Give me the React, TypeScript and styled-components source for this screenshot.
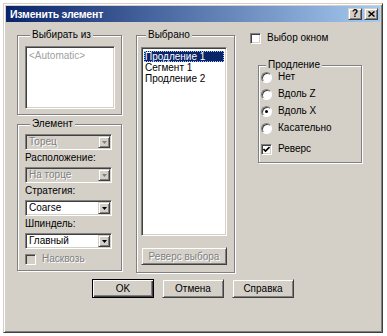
import React from 'react';
import styled, { createGlobalStyle, css } from 'styled-components';

const Global = createGlobalStyle`
    body {
        margin: 0;
        background: #ffffff;
        font-family: 'Liberation Sans', Arial, sans-serif;
        font-size: 10px;
        color: #000000;
    }
`;

const face = '#d4d0c8';

const sunken = css`
    border: 1px solid;
    border-color: #808080 #ffffff #ffffff #808080;
    box-shadow: inset 1px 1px 0 #404040, inset -1px -1px 0 ${face};
`;

const raised = css`
    border: 1px solid;
    border-color: ${face} #404040 #404040 ${face};
    box-shadow: inset 1px 1px 0 #ffffff, inset -1px -1px 0 #808080;
`;

const disabledText = css`
    color: #808080;
    text-shadow: 1px 1px 0 #ffffff;
`;

const Window = styled.div`
    margin: 3px 0 0 3px;
    width: 380px;
    height: 330px;
    box-sizing: border-box;
    background: ${face};
    ${raised};
    padding: 2px;
    display: flex;
    flex-direction: column;
`;

const TitleBar = styled.div`
    height: 16px;
    display: flex;
    align-items: center;
    padding: 0 2px 0 4px;
    background: linear-gradient(to right, #0a246a, #a6caf0);
`;

const Title = styled.div`
    flex: 1;
    color: #ffffff;
    font-weight: bold;
    font-size: 10.5px;
    letter-spacing: -0.2px;
`;

const CaptionButton = styled.div`
    width: 14px;
    height: 12px;
    box-sizing: border-box;
    background: ${face};
    ${raised};
    display: flex;
    align-items: center;
    justify-content: center;
    font-weight: bold;
    font-size: 10px;
    line-height: 10px;
`;

const Body = styled.div`
    padding-top: 7px;
`;

const Columns = styled.div`
    display: flex;
    align-items: flex-start;
    padding-left: 11px;
`;

const LeftCol = styled.div`
    width: 105px;
    display: flex;
    flex-direction: column;
    gap: 3px;
`;

const MiddleCol = styled.div`
    width: 99px;
    margin-left: 14px;
`;

const RightCol = styled.div`
    margin-left: 15px;
    padding-top: 3px;
    width: 112px;
`;

const Group = styled.fieldset<{ $pad: string }>`
    margin: 0;
    min-width: 0;
    box-sizing: border-box;
    border: 1px solid #808080;
    box-shadow: inset 1px 1px 0 #ffffff, 1px 1px 0 #ffffff;
    padding: ${(p) => p.$pad};
    display: flex;
    flex-direction: column;
`;

const Legend = styled.legend`
    margin-left: 5px;
    padding: 0 2px;
    background: ${face};
    line-height: 12px;
    font-size: 10px;
`;

const ListBox = styled.div<{ $h: number }>`
    height: ${(p) => p.$h}px;
    box-sizing: border-box;
    background: #ffffff;
    ${sunken};
    padding: 3px 2px;
`;

const ListItem = styled.div<{ $selected?: boolean; $muted?: boolean }>`
    height: 11px;
    line-height: 11px;
    padding-left: 1px;
    white-space: nowrap;
    ${(p) => p.$muted && 'color: #a0a0a0;'}
    ${(p) =>
        p.$selected &&
        css`
            background: #0a246a;
            color: #ffffff;
            outline: 1px dotted #a6caf0;
            outline-offset: -1px;
        `}
`;

const Label = styled.div`
    margin-top: 2px;
    height: 12px;
    line-height: 12px;
`;

const Combo = styled.div<{ $disabled?: boolean }>`
    margin-top: 3px;
    height: 16px;
    box-sizing: border-box;
    ${sunken};
    background: ${(p) => (p.$disabled ? face : '#ffffff')};
    display: flex;
    align-items: stretch;
    padding: 1px;
    &:first-of-type {
        margin-top: 0;
    }
`;

const ComboText = styled.div<{ $disabled?: boolean }>`
    flex: 1;
    padding-left: 2px;
    line-height: 12px;
    ${(p) => p.$disabled && disabledText};
`;

const DropButton = styled.div`
    width: 12px;
    box-sizing: border-box;
    background: ${face};
    ${raised};
    display: flex;
    align-items: center;
    justify-content: center;
`;

const CheckRow = styled.div<{ $top?: number }>`
    display: flex;
    align-items: center;
    height: 12px;
    margin-top: ${(p) => p.$top ?? 0}px;
    gap: 6px;
`;

const Box = styled.div<{ $disabled?: boolean }>`
    width: 11px;
    height: 11px;
    box-sizing: border-box;
    ${sunken};
    background: ${(p) => (p.$disabled ? face : '#ffffff')};
    display: flex;
    align-items: center;
    justify-content: center;
`;

const Radio = styled.div`
    width: 11px;
    height: 11px;
    box-sizing: border-box;
    border-radius: 50%;
    border: 1px solid;
    border-color: #808080 #ffffff #ffffff #808080;
    box-shadow: inset 1px 1px 0 #404040;
    background: #ffffff;
    display: flex;
    align-items: center;
    justify-content: center;
`;

const Dot = styled.div`
    width: 3px;
    height: 3px;
    border-radius: 50%;
    background: #000000;
`;

const CheckText = styled.span<{ $disabled?: boolean }>`
    line-height: 12px;
    white-space: nowrap;
    ${(p) => p.$disabled && disabledText};
`;

const RadioGroup = styled.div`
    display: flex;
    flex-direction: column;
    gap: 5px;
`;

const PushButton = styled.div<{ $default?: boolean; $disabled?: boolean; $w?: number; $h?: number }>`
    width: ${(p) => p.$w ?? 62}px;
    height: ${(p) => p.$h ?? 19}px;
    box-sizing: border-box;
    background: ${face};
    display: flex;
    align-items: center;
    justify-content: center;
    ${(p) =>
        p.$default
            ? css`
                  border: 1px solid #000000;
                  box-shadow: inset 1px 1px 0 #ffffff, inset -1px -1px 0 #404040, inset -2px -2px 0 #808080;
              `
            : raised};
    ${(p) => p.$disabled && disabledText};
`;

const ButtonRow = styled.div`
    display: flex;
    justify-content: center;
    gap: 8px;
    margin-top: 6px;
`;

const Arrow = ({ disabled }: { disabled?: boolean }) => (
    <svg width="5" height="3" viewBox="0 0 5 3">
        <path d="M0 0H5L2.5 3Z" fill={disabled ? '#808080' : '#000000'} />
    </svg>
);

const Check = () => (
    <svg width="7" height="7" viewBox="0 0 7 7">
        <path d="M0.5 3 L2.5 5 L6.5 1" stroke="#000000" strokeWidth="1.6" fill="none" />
    </svg>
);

const ComboBox = ({ value, disabled }: { value: string; disabled?: boolean }) => (
    <Combo $disabled={disabled}>
        <ComboText $disabled={disabled}>{value}</ComboText>
        <DropButton>
            <Arrow disabled={disabled} />
        </DropButton>
    </Combo>
);

export default function App() {
    return (
        <>
            <Global />
            <Window>
                <TitleBar>
                    <Title>Изменить элемент</Title>
                    <CaptionButton>?</CaptionButton>
                    <CaptionButton style={{ marginLeft: 2 }}>
                        <svg width="7" height="6" viewBox="0 0 7 6">
                            <path d="M0.5 0.5L6.5 5.5M6.5 0.5L0.5 5.5" stroke="#000" strokeWidth="1.5" />
                        </svg>
                    </CaptionButton>
                </TitleBar>
                <Body>
                    <Columns>
                        <LeftCol>
                            <Group $pad="5px 6px 5px 7px">
                                <Legend>Выбирать из</Legend>
                                <ListBox $h={63}>
                                    <ListItem $muted>&lt;Automatic&gt;</ListItem>
                                </ListBox>
                            </Group>
                            <Group $pad="4px 9px 5px 7px">
                                <Legend>Элемент</Legend>
                                <ComboBox value="Торец" disabled />
                                <Label>Расположение:</Label>
                                <ComboBox value="На торце" disabled />
                                <Label>Стратегия:</Label>
                                <ComboBox value="Coarse" />
                                <Label>Шпиндель:</Label>
                                <ComboBox value="Главный" />
                                <CheckRow $top={4}>
                                    <Box $disabled />
                                    <CheckText $disabled>Насквозь</CheckText>
                                </CheckRow>
                            </Group>
                        </LeftCol>
                        <MiddleCol>
                            <Group $pad="6px 7px 7px 4px">
                                <Legend>Выбрано</Legend>
                                <ListBox $h={189}>
                                    <ListItem $selected>Продление 1</ListItem>
                                    <ListItem>Сегмент 1</ListItem>
                                    <ListItem>Продление 2</ListItem>
                                </ListBox>
                                <PushButton $w={86} $h={18} $disabled style={{ marginTop: 11 }}>
                                    Реверс выбора
                                </PushButton>
                            </Group>
                        </MiddleCol>
                        <RightCol>
                            <CheckRow>
                                <Box />
                                <CheckText>Выбор окном</CheckText>
                            </CheckRow>
                            <Group $pad="0 6px 7px 2px" style={{ marginLeft: 8, marginTop: 15, width: 104 }}>
                                <Legend>Продление</Legend>
                                <RadioGroup>
                                    <CheckRow>
                                        <Radio />
                                        <CheckText>Нет</CheckText>
                                    </CheckRow>
                                    <CheckRow>
                                        <Radio />
                                        <CheckText>Вдоль Z</CheckText>
                                    </CheckRow>
                                    <CheckRow>
                                        <Radio>
                                            <Dot />
                                        </Radio>
                                        <CheckText>Вдоль X</CheckText>
                                    </CheckRow>
                                    <CheckRow>
                                        <Radio />
                                        <CheckText>Касательно</CheckText>
                                    </CheckRow>
                                </RadioGroup>
                                <CheckRow $top={9}>
                                    <Box>
                                        <Check />
                                    </Box>
                                    <CheckText>Реверс</CheckText>
                                </CheckRow>
                            </Group>
                        </RightCol>
                    </Columns>
                    <ButtonRow>
                        <PushButton $default>OK</PushButton>
                        <PushButton>Отмена</PushButton>
                        <PushButton>Справка</PushButton>
                    </ButtonRow>
                </Body>
            </Window>
        </>
    );
}
